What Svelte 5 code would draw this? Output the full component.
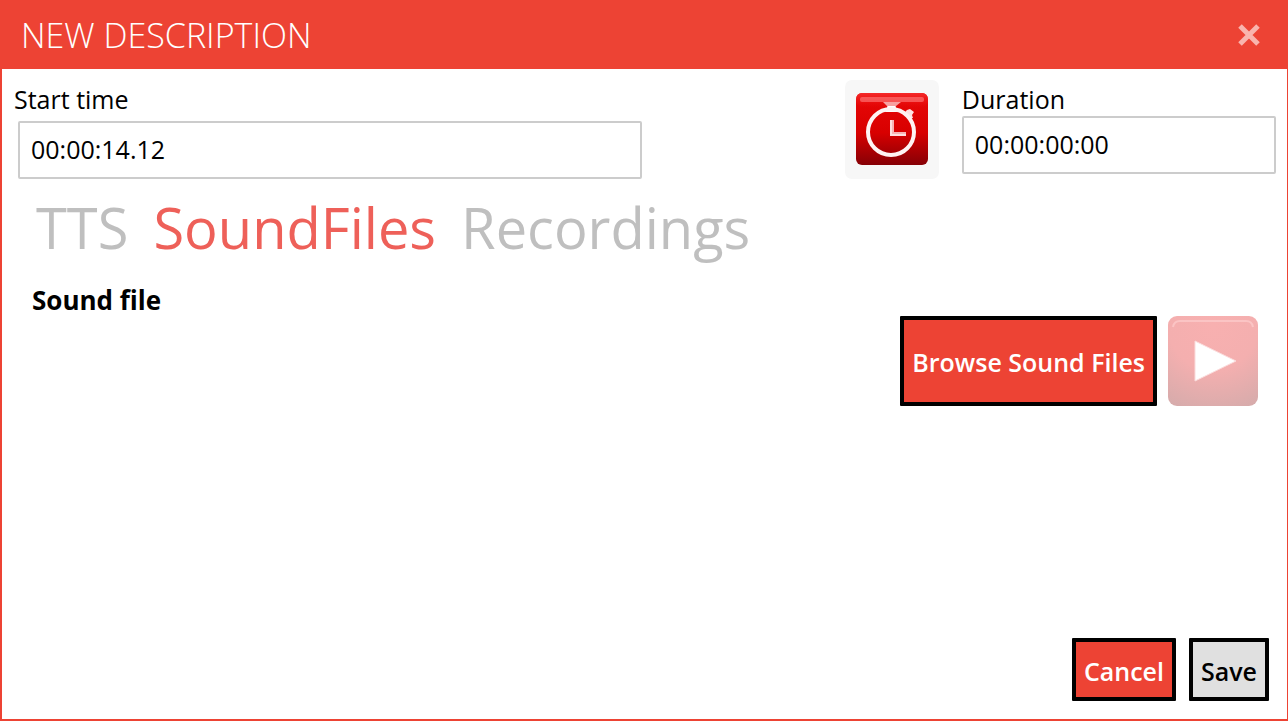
<script lang="ts">
    let startTime = $state('00:00:14.12');
    let duration = $state('00:00:00:00');
    let activeTab = $state('SoundFiles');

    const tabs = ['TTS', 'SoundFiles', 'Recordings'];
</script>

<div class="dialog" role="dialog" aria-labelledby="dialog-title">
    <header class="title-bar">
        <h1 id="dialog-title">NEW DESCRIPTION</h1>
        <button type="button" class="close" aria-label="Close">
            <svg width="24" height="24" viewBox="0 0 24 24">
                <path d="M3 3 L21 21 M21 3 L3 21" stroke="#f9b4ad" stroke-width="5" />
            </svg>
        </button>
    </header>

    <main class="content">
        <div class="times">
            <div class="field start">
                <label for="start-time">Start time</label>
                <input id="start-time" type="text" bind:value={startTime} />
            </div>

            <button type="button" class="clock" aria-label="Use current time">
                <svg width="72" height="72" viewBox="0 0 72 72">
                    <defs>
                        <linearGradient id="clock-red" x1="0" y1="0" x2="0" y2="1">
                            <stop offset="0" stop-color="#e80808" />
                            <stop offset="0.55" stop-color="#d80000" />
                            <stop offset="1" stop-color="#860006" />
                        </linearGradient>
                        <linearGradient id="clock-shine" x1="0" y1="0" x2="0" y2="1">
                            <stop offset="0" stop-color="#f52a2a" />
                            <stop offset="1" stop-color="#ee1515" stop-opacity="0" />
                        </linearGradient>
                    </defs>
                    <rect width="72" height="72" rx="6" fill="url(#clock-red)" />
                    <rect width="72" height="14" rx="6" fill="url(#clock-shine)" />
                    <rect x="4" y="4" width="64" height="5" rx="2" fill="#ff8080" opacity="0.6" />
                    <path d="M27 9 H45 L40 13 V17 H31 V13 Z" fill="#f7a0a0" />
                    <path d="M32 13 H39 L42 19 H29 Z" fill="#fff" />
                    <path d="M48 20 L51 17 L54 16 L58 19 L56 22 L57 25 L54 25 Z" fill="#ffe3e3" />
                    <circle cx="35" cy="39" r="23" fill="none" stroke="#fff3f3" stroke-width="4" />
                    <path d="M36 27 V41 H50" fill="none" stroke="#f7b5b5" stroke-width="4" />
                    <path d="M35 27 V42 H50" fill="none" stroke="#ffe0e0" stroke-width="2" />
                </svg>
            </button>

            <div class="field duration">
                <label for="duration">Duration</label>
                <input id="duration" type="text" bind:value={duration} />
            </div>
        </div>

        <div class="tabs" role="tablist">
            {#each tabs as tab}
                <button
                    type="button"
                    role="tab"
                    class:active={tab === activeTab}
                    aria-selected={tab === activeTab}
                    onclick={() => (activeTab = tab)}
                >{tab}</button>
            {/each}
        </div>

        <section class="sound">
            <h2>Sound file</h2>
            <div class="sound-actions">
                <button type="button" class="btn primary">Browse Sound Files</button>
                <button type="button" class="play" aria-label="Play" disabled>
                    <svg width="90" height="90" viewBox="0 0 90 90">
                        <defs>
                            <radialGradient id="play-pink" cx="0.5" cy="0.1" r="1">
                                <stop offset="0" stop-color="#f8b0b0" />
                                <stop offset="0.5" stop-color="#f4afaf" />
                                <stop offset="1" stop-color="#d6abab" />
                            </radialGradient>
                        </defs>
                        <rect width="90" height="90" rx="9" fill="url(#play-pink)" />
                        <path d="M5 11 Q6 5 12 5 H78 Q84 5 85 11" fill="none" stroke="#fbc4c4" stroke-width="2" />
                        <path d="M27 25 L68 45 L27 65 Z" fill="#fff" stroke="#fbdcdc" />
                    </svg>
                </button>
            </div>
        </section>

        <footer class="actions">
            <button type="button" class="btn primary">Cancel</button>
            <button type="button" class="btn">Save</button>
        </footer>
    </main>
</div>

<style>
    :global(body) {
        background: #fff;
    }

    .dialog {
        box-sizing: border-box;
        display: flex;
        flex-direction: column;
        min-height: 100vh;
        border: 2px solid #ed4334;
        border-top: none;
        border-right-width: 1px;
        background: #fff;
        color: #000;
        font-family: "Open Sans", "Noto Sans", sans-serif;
        font-size: 25px;
        line-height: 32px;
    }

    button,
    input {
        font: inherit;
        color: inherit;
    }

    button {
        padding: 0;
        border: none;
        background: none;
        cursor: pointer;
    }

    svg {
        display: block;
    }

    .title-bar {
        display: flex;
        align-items: center;
        justify-content: space-between;
        height: 69px;
        padding: 0 26px 0 19px;
        background: #ed4334;
        color: #fff;
    }

    h1 {
        margin: 0;
        font-size: 34px;
        font-weight: 300;
        line-height: 40px;
    }

    .content {
        display: flex;
        flex: 1;
        flex-direction: column;
        padding: 11px 11px 18px 12px;
    }

    .times {
        display: grid;
        grid-template-columns: minmax(0, 18fr) 94px minmax(0, 7fr);
        align-items: start;
        column-gap: 23px;
    }

    .field {
        display: flex;
        flex-direction: column;
        padding-top: 3px;
    }

    .field input {
        box-sizing: border-box;
        min-width: 0;
        height: 58px;
        margin-top: 1px;
        padding: 0 11px 3px;
        border: 2px solid #ccc;
        border-radius: 2px;
        background: #fff;
    }

    .start {
        padding-right: 180px;
        gap: 5px;
    }

    .start input {
        margin-left: 4px;
    }

    .clock {
        display: flex;
        align-items: center;
        justify-content: center;
        height: 99px;
        padding-bottom: 2px;
        border-radius: 7px;
        background: #f7f7f7;
    }

    .tabs {
        display: flex;
        gap: 25px;
        margin-top: 12px;
        padding-left: 22px;
        font-size: 56px;
        line-height: 72px;
    }

    .tabs button {
        color: #bfbfbf;
    }

    .tabs .active {
        color: #ee6059;
    }

    .sound {
        padding: 21px 18px 0;
    }

    h2 {
        margin: 0;
        font-size: 26px;
        font-weight: 700;
        line-height: 32px;
    }

    .sound-actions {
        display: flex;
        justify-content: flex-end;
        gap: 11px;
    }

    .btn {
        padding: 2px 8px 0;
        border: 4px solid #000;
        border-radius: 1px;
        background: #e0e0e0;
        font-weight: 600;
    }

    .primary {
        background: #ed4334;
        color: #fff;
    }

    .actions {
        display: flex;
        justify-content: flex-end;
        gap: 13px;
        margin-top: auto;
        padding-right: 7px;
    }

    .actions .btn {
        height: 63px;
    }
</style>
